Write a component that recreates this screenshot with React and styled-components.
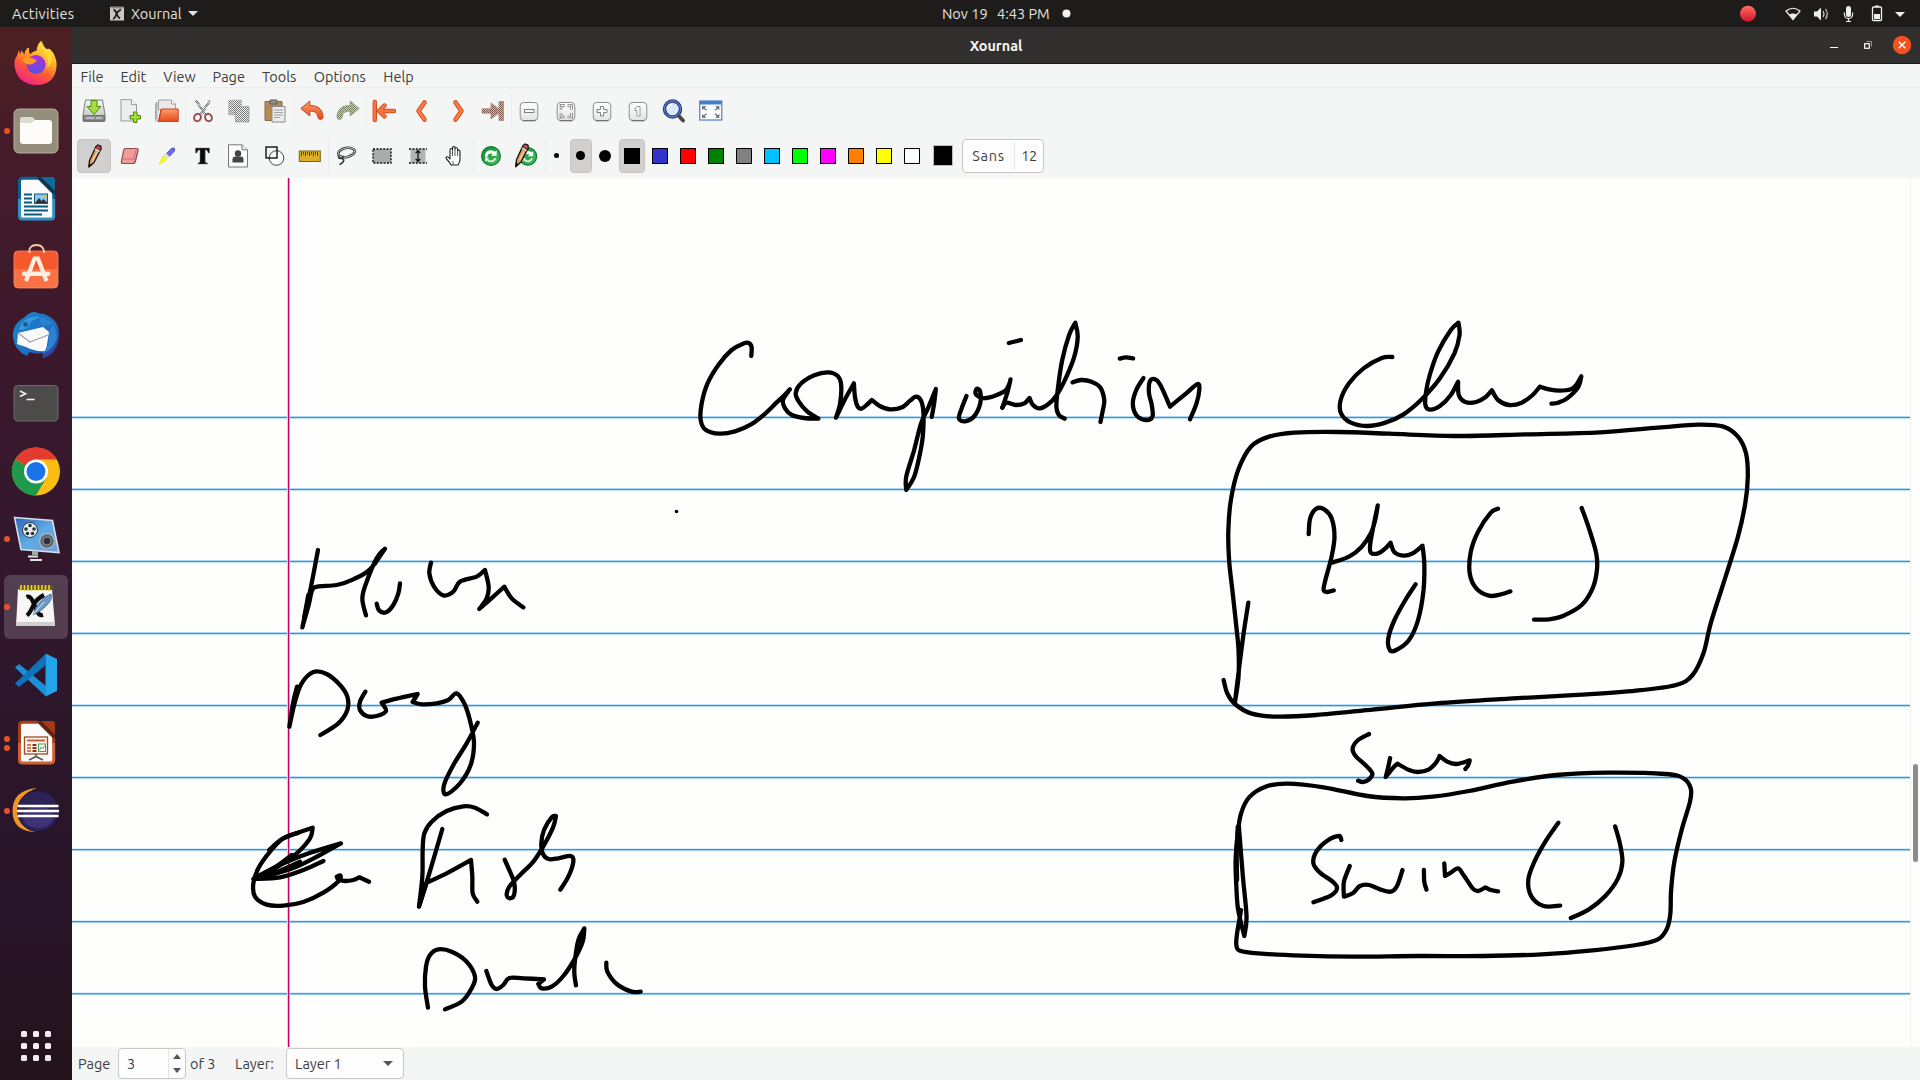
import React from "react";
import styled, { createGlobalStyle, css } from "styled-components";

const Global = createGlobalStyle`
  * { box-sizing: border-box; }
  html, body { margin: 0; padding: 0; background: #f4f6f6; overflow: hidden; }
  svg { display: block; flex: none; }
`;

const ui = `Ubuntu, "Open Sans", "Noto Sans", sans-serif`;

const Desktop = styled.div`
  width: 1920px;
  height: 1080px;
  display: flex;
  flex-direction: column;
  font-family: ${ui};
  font-size: 14.5px;
  color: #3d3d3d;
  overflow: hidden;
`;

const TopBar = styled.header`
  height: 27px;
  flex: none;
  display: grid;
  grid-template-columns: 1fr auto 1fr;
  align-items: center;
  background: #1d1c1b;
  color: #e4e2df;
  line-height: 27px;
`;

const TopLeft = styled.div`
  display: flex;
  align-items: center;
  padding-left: 12px;
`;

const TopCenter = styled.div`
  display: flex;
  align-items: center;
  padding-left: 93px;
  white-space: pre;
`;

const TopRight = styled.div`
  display: flex;
  align-items: center;
  justify-content: flex-end;
  padding-right: 14px;
`;

const Label = styled.span`
  display: block;
  flex: none;
  width: ${(p) => (p.$w ? `${p.$w}px` : "auto")};
  letter-spacing: ${(p) => p.$ls || 0}px;
  white-space: nowrap;
`;

const Space = styled.div`
  width: ${(p) => p.$w}px;
  flex: none;
`;

const Body = styled.div`
  flex: 1;
  display: flex;
  min-height: 0;
`;

const Dock = styled.nav`
  width: 72px;
  flex: none;
  display: flex;
  flex-direction: column;
  align-items: center;
  padding-top: 2px;
  background: linear-gradient(#4d2023 0%, #451b29 12%, #3b182c 32%, #34182e 48%, #2b162a 68%, #281428 86%, #25131f 93%, #23131b 100%);
`;

const DockSlot = styled.div`
  position: relative;
  width: 64px;
  height: 64px;
  margin: 2px 0;
  flex: none;
  display: flex;
  align-items: center;
  justify-content: center;
  border-radius: 6px;
  background: ${(p) => (p.$active ? "rgba(255,255,255,.17)" : "transparent")};
`;

const Running = styled.div`
  position: absolute;
  left: 0;
  top: 0;
  height: 64px;
  display: flex;
  flex-direction: column;
  justify-content: center;
  gap: 3px;
`;

const RunDot = styled.i`
  width: 6px;
  height: 6px;
  border-radius: 50%;
  background: #e95228;
`;

const AppGrid = styled.div`
  display: grid;
  grid-template-columns: repeat(3, 6px);
  grid-auto-rows: 6px;
  gap: 6px;
  margin-top: auto;
  margin-bottom: 19px;
`;

const GridDot = styled.i`
  border-radius: 1.5px;
  background: #fbeaf2;
`;

const Window = styled.main`
  flex: 1;
  min-width: 0;
  display: flex;
  flex-direction: column;
  background: #f4f6f6;
`;

const TitleBar = styled.div`
  height: 37px;
  flex: none;
  display: grid;
  grid-template-columns: 1fr auto 1fr;
  align-items: center;
  background: #32302f;
  border-bottom: 1px solid #1b1a19;
  color: #f6f4f2;
  font-weight: 700;
  font-size: 14.4px;
`;

const Title = styled.span`
  padding-top: 2px;
`;

const WinButtons = styled.div`
  display: flex;
  align-items: center;
  justify-content: flex-end;
  padding-right: 9px;
`;

const MenuBar = styled.div`
  height: 24px;
  flex: none;
  display: flex;
  align-items: center;
  padding: 2px 0 0 8.5px;
  border-bottom: 1px solid #eceeee;
`;

const ToolRow = styled.div`
  height: 45px;
  flex: none;
  display: flex;
  align-items: center;
  padding-left: 4px;
`;

const Slot = styled.div`
  width: ${(p) => p.$w || 36.28}px;
  height: 34px;
  flex: none;
  display: flex;
  align-items: center;
  justify-content: center;
  ${(p) => p.$sep && css`box-shadow: inset 1px 0 0 #eaecec;`}
`;

const Press = styled.div`
  width: ${(p) => p.$w || 34}px;
  height: 34px;
  flex: none;
  display: flex;
  align-items: center;
  justify-content: center;
  border-radius: 4px;
  border: 1px solid ${(p) => (p.$on ? "#c6c5c4" : "transparent")};
  background: ${(p) => (p.$on ? "#d2d0cf" : "transparent")};
`;

const Dot = styled.i`
  width: ${(p) => p.$d}px;
  height: ${(p) => p.$d}px;
  border-radius: 50%;
  background: #000;
`;

const Swatch = styled.i`
  width: 16px;
  height: 16px;
  border: 1px solid #000;
  background: ${(p) => p.$c};
`;

const BigSwatch = styled.i`
  width: 20px;
  height: 21px;
  border: 1px solid #bdbcbb;
  background: #000;
  flex: none;
`;

const FontButton = styled.div`
  width: 82px;
  height: 34px;
  display: flex;
  align-items: center;
  border: 1px solid #c9c6c3;
  border-radius: 4px;
  background: #fdfdfd;
  flex: none;
`;

const FontName = styled.span`
  width: 51px;
  padding-left: 9px;
  letter-spacing: .7px;
`;

const FontSize = styled.span`
  height: 28px;
  line-height: 28px;
  padding-left: 6px;
  border-left: 1px solid #e6e5e4;
  letter-spacing: -.3px;
`;

const Work = styled.div`
  flex: 1;
  min-height: 0;
  display: flex;
  background: #fefefc;
`;

const Paper = styled.div`
  width: 1838px;
  flex: none;
  overflow: hidden;
`;

const Scroll = styled.div`
  flex: 1;
  border-left: 1px solid #f1f1f0;
  padding: 586px 0 0 2px;
`;

const Thumb = styled.div`
  width: 5px;
  height: 98px;
  border-radius: 3px;
  background: #8b8b8a;
`;

const StatusBar = styled.footer`
  height: 33px;
  flex: none;
  display: flex;
  align-items: center;
  padding-left: 6px;
`;

const Field = styled.div`
  width: ${(p) => p.$w}px;
  height: 31px;
  flex: none;
  display: flex;
  align-items: center;
  justify-content: space-between;
  padding-left: 8px;
  border: 1px solid #c9c6c3;
  border-radius: 4px;
  background: #fefefe;
`;

const Steppers = styled.div`
  width: 17px;
  height: 29px;
  border-left: 1px solid #e4e3e2;
  display: grid;
  grid-template-rows: 1fr 1fr;
  place-items: center;
`;

const Triangle = styled.i`
  width: 0;
  height: 0;
  border-left: ${(p) => p.$s}px solid transparent;
  border-right: ${(p) => p.$s}px solid transparent;
  ${(p) =>
    p.$up
      ? css`border-bottom: ${p.$h}px solid ${p.$c};`
      : css`border-top: ${p.$h}px solid ${p.$c};`}
`;

/* ---------- ink ---------- */

// Turns "x,y x,y / x,y" into a smooth path. A slash marks a sharp turn.
function smooth(spec) {
  const runs = [];
  let last = null;
  spec.split("/").forEach((chunk) => {
    const pts = chunk.trim().split(/\s+/).filter(Boolean).map((p) => p.split(",").map(Number));
    if (last) pts.unshift(last);
    last = pts[pts.length - 1];
    runs.push(pts);
  });
  let d = `M${runs[0][0]}`;
  runs.forEach((p) => {
    for (let i = 0; i < p.length - 1; i++) {
      const a = p[i - 1] || p[i];
      const b = p[i];
      const c = p[i + 1];
      const e = p[i + 2] || c;
      d += `C${b[0] + (c[0] - a[0]) / 6},${b[1] + (c[1] - a[1]) / 6} ${c[0] - (e[0] - b[0]) / 6},${c[1] - (e[1] - b[1]) / 6} ${c}`;
    }
  });
  return d;
}

const INK = [
  {
    x: 680, y: 300, sx: 2.904,
    s: [
      "207,168 208,142 200,129 183,131 150,150 112,194 80,250 63,310 60,360 75,390 115,401 160,394 205,374 245,343 280,308 303,286 319,268 / 299,300 305,325 325,345 360,354 402,356 / 370,335 345,305 336,280 350,252 390,226 430,217 458,228 468,255 465,310 453,353 / 478,300 505,250 / 508,290 515,318 527,326 545,312 557,300 / 580,318 610,328 645,322 668,302 685,290 700,302 707,340 705,410 695,470 680,530 657,570 / 657,530 680,450 700,370 720,325 743,267 / 738,310 731,351",
      "832,288 818,325 810,355 828,364 855,348 872,310 872,275 862,266 858,280 868,290 890,294 920,285 945,272 955,255 960,238 / 950,280 936,323",
      "936,323 / 948,308 975,315 1000,310 1015,294 / 1025,315 1045,325 1070,312 1092,288 1120,235 1145,170 1155,110 1148,68 / 1130,105 1110,180 1098,260 1093,320 1100,345 1117,356",
      "955,129 990,120",
      "1277,176 1295,172 1316,175",
      "1140,247 1165,240 1195,245 1220,262 1232,300 1228,330 1221,366",
      "1346,234 1325,270 1315,310 1325,345 1352,360 1372,350 1370,315 1362,280 1364,245 1378,237 1395,255 1423,320 / 1470,280 1503,252 1508,270 1500,310 1481,358",
    ],
  },
  {
    x: 1200, y: 300, sx: 2.751,
    s: [
      "529,171 500,174 450,205 410,250 387,300 388,340 415,368 460,378 510,368 560,343 610,298 660,235 700,160 714,105 711,68 / 690,90 655,155 632,225 622,275 620,315 632,329 660,318 690,285 710,245 / 712,285 730,306 760,306 785,292 803,271 / 820,300 850,315 885,308 915,285 935,260 / 960,268 990,272 1020,268 1035,255 1049,229 / 1040,262 1010,295 985,308 967,311",
      "133,908 120,1000 108,1100 96,1208 / 106,1130 106,1050 100,980 90,880 80,780 78,690 85,600 105,510 140,440 190,410 260,398 380,396 520,401 700,408 900,403 1100,397 1260,383 1370,374 1440,380 1480,410 1502,460 1507,530 1500,610 1480,710 1440,850 1405,970 1385,1060 1355,1125 1310,1155 1200,1172 1050,1184 850,1196 650,1210 480,1228 320,1245 210,1250 140,1240 96,1212 75,1180 65,1140",
      "299,702 303,655 320,626 342,628 362,655 370,710 362,770 345,840 340,870 350,876 368,871",
      "362,788 410,770 445,740 470,700 482,660 489,616 / 475,690 468,735 470,758 490,760 510,745 524,728 / 535,757 560,767 585,760 612,737 / 617,790 615,870 600,960 575,1020 540,1050 522,1050 518,1015 535,960 565,900 593,853",
      "820,626 800,638 765,695 745,755 742,820 760,865 795,887 825,884 854,874",
      "1050,624 1070,685 1090,760 1092,810 1080,865 1050,915 1000,947 960,958 919,959",
    ],
  },
  {
    x: 1200, y: 710, sx: 2.751,
    s: [
      "465,72 435,90 420,115 428,138 455,165 474,190 465,208 448,216 435,212",
      "523,144 518,170 511,201 / 530,175 543,161 / 575,180 600,186 630,178 650,157 659,138 / 680,155 705,162 742,151 / 738,165 730,177",
      "113,600 102,670 100,705 110,722 160,730 280,737 420,740 600,738 780,738 940,733 1080,721 1200,705 1260,688 1285,655 1294,610 1296,540 1305,455 1325,360 1348,275 1350,235 1330,205 1280,192 1120,188 980,195 860,215 740,243 640,260 560,265 460,258 340,232 240,221 180,230 135,262 113,310 104,370 98,450 100,530 105,600 122,678 / 128,620 118,500 107,350",
      "104,350 101,430 102,510",
      "389,390 382,378 350,392 320,425 312,460 330,488 365,515 377,535 360,557 312,577",
      "412,468 396,515 396,560 / 420,550 440,528 465,525 495,538 525,545 542,528 557,480",
      "616,480 617,515 623,539",
      "672,460 674,498 / 690,488 710,475 725,495 750,535 765,543 785,532 / 800,540 820,544",
      "986,338 950,395 920,455 903,510 912,560 945,588 991,587",
      "1142,349 1155,400 1162,455 1150,505 1115,558 1070,598 1020,624",
    ],
  },
  {
    x: 230, y: 520, sx: 3,
    s: [
      "264,90 243,200 217,322 / 236,255 246,212 262,200 320,195 370,178 420,148 465,86 / 440,115 410,185 397,235 408,286",
      "455,95 435,130", "235,225 222,295",
      "440,251 448,272 468,277 490,255 505,220 510,190",
      "603,128 598,160 612,200 640,226 670,215 690,185 740,170 765,150 / 776,200 770,235 748,267 / 790,230 823,200 / 845,235 880,262",
      "201,500 190,545 178,620 / 195,545 215,490 250,456 290,462 330,495 352,530 352,570 325,610 271,645",
      "406,515 390,545 390,570 410,588 440,588 468,573 455,548 / 500,536 563,522 / 548,546 / 575,553 620,550 655,540 680,520 705,555 722,610 732,670 722,735 690,790 648,823 642,795 670,735 710,670 743,608",
    ],
  },
  {
    x: 230, y: 780, sx: 3,
    s: [
      "118,210 160,175 248,143 / 240,175 200,220 140,262 75,293 / 150,255 230,222 333,190 / 270,225 180,268 70,297 / 150,292 220,270 280,243",
      "205,158 160,175 120,215 85,265 70,310 75,350 110,374 160,377 220,366 280,338 326,303 326,290 / 326,298 345,303 370,300 388,292 / 417,305",
      "95,285 145,255 185,225", "90,288 150,272 210,245", "320,290 330,286 332,293 322,295",
      "771,103 735,83 700,79 650,93 605,125 583,160 578,210 577,290 567,380 / 595,290 637,147",
      "567,378 590,308 / 650,280 723,240 / 727,290 728,340 742,365",
      "824,239 840,275 853,310 852,345 840,355 830,345 838,320 870,285 910,245 945,190 970,140 978,108 / 965,112 942,150 934,190 938,220 955,237 985,235 1022,228 1030,245 1015,290 991,329",
      "594,683 585,620 588,560 600,525 625,508 665,515 710,545 735,590 725,625 695,665 645,688",
      "769,573 785,615 800,627 820,615 838,594 880,595 942,598 / 925,612 / 935,625 965,620 1000,588 1035,535 1058,485 1063,445 / 1045,480 1035,540 1033,580 1038,616",
      "1060,460 1045,510",
      "1129,548 1132,575 1160,612 1205,635 1232,635",
    ],
  },
];

const RULES = [417.5, 489.5, 561.5, 633.5, 705.6, 777.6, 849.7, 921.7, 993.8];

function Page() {
  return (
    <svg width="1838" height="869" viewBox="72 178 1838 869">
      {RULES.map((y) => (
        <g key={y}>
          <rect x="72" y={y - 1.3} width="1838" height="2.5" fill="#bfe4fb" />
          <rect x="72" y={y - 0.7} width="1838" height="1.3" fill="#3d93d6" />
        </g>
      ))}
      <rect x="287" y="178" width="3" height="869" fill="#f6bfe0" />
      <rect x="288" y="178" width="1.2" height="869" fill="#c4006e" />
      <g fill="none" stroke="#000" strokeWidth="4.3" strokeLinecap="round" strokeLinejoin="round">
        {INK.map((g, i) => (
          <g key={i} transform={`translate(${g.x} ${g.y}) scale(${1 / g.sx} ${1 / 3})`}>
            {g.s.map((s, j) => (
              <path key={j} d={smooth(s)} vectorEffect="non-scaling-stroke" />
            ))}
          </g>
        ))}
      </g>
      <circle cx="676.500" cy="511.500" r="1.800" fill="#000" />
    </svg>
  );
}

/* ---------- toolbar icons ---------- */

const I = ({ children, s = 24 }) => (
  <svg width={s} height={s} viewBox="0 0 24 24" fill="none">
    {children}
  </svg>
);

function Defs() {
  return (
    <svg width="0" height="0" style={{ position: "absolute" }}>
      <defs>
        <linearGradient id="or" x1="0" y1="0" x2="0" y2="1"><stop offset="0" stopColor="#fba06a" /><stop offset="1" stopColor="#e8491c" /></linearGradient>
        <linearGradient id="gry" x1="0" y1="0" x2="0" y2="1"><stop offset="0" stopColor="#f7f7f7" /><stop offset="1" stopColor="#bdbdbd" /></linearGradient>
        <linearGradient id="btn" x1="0" y1="0" x2="0" y2="1"><stop offset="0" stopColor="#ffffff" /><stop offset="1" stopColor="#e3e3e3" /></linearGradient>
        <pattern id="dg" width="2" height="2" patternUnits="userSpaceOnUse"><rect width="2" height="2" fill="#f4f4f4" /><rect width="1" height="1" fill="#777" /><rect x="1" y="1" width="1" height="1" fill="#777" /></pattern>
        <pattern id="dr" width="2" height="2" patternUnits="userSpaceOnUse"><rect width="2" height="2" fill="#e0b9ac" /><rect width="1" height="1" fill="#7e5548" /><rect x="1" y="1" width="1" height="1" fill="#7e5548" /></pattern>
        <pattern id="dn" width="2" height="2" patternUnits="userSpaceOnUse"><rect width="2" height="2" fill="#c6cfb8" /><rect width="1" height="1" fill="#75805f" /><rect x="1" y="1" width="1" height="1" fill="#75805f" /></pattern>
        <linearGradient id="ffo" x1=".8" y1="0" x2=".3" y2="1"><stop offset="0" stopColor="#fff14a" /><stop offset=".35" stopColor="#ffb52b" /><stop offset=".65" stopColor="#ff5a34" /><stop offset="1" stopColor="#f0208a" /></linearGradient>
        <linearGradient id="ffp" x1="0" y1="0" x2="0" y2="1"><stop offset="0" stopColor="#b02fe0" /><stop offset="1" stopColor="#5a50d8" /></linearGradient>
        <linearGradient id="soft" x1="0" y1="0" x2="0" y2="1"><stop offset="0" stopColor="#f4582b" /><stop offset=".5" stopColor="#f4582b" /><stop offset=".5" stopColor="#fa7145" /><stop offset="1" stopColor="#fa7145" /></linearGradient>
        <linearGradient id="wr" x1="0" y1="0" x2="0" y2="1"><stop offset=".5" stopColor="#0a5f8d" /><stop offset=".5" stopColor="#2f92c2" /></linearGradient>
        <linearGradient id="im" x1="0" y1="0" x2="0" y2="1"><stop offset=".5" stopColor="#a83d17" /><stop offset=".5" stopColor="#cf6135" /></linearGradient>
        <linearGradient id="tb" x1="0" y1="0" x2="1" y2="1"><stop offset="0" stopColor="#1a86c9" /><stop offset=".6" stopColor="#1f6fc4" /><stop offset="1" stopColor="#3a2a8c" /></linearGradient>
        <linearGradient id="scr" x1="0" y1="0" x2="1" y2="1"><stop offset="0" stopColor="#2a63b4" /><stop offset=".5" stopColor="#5fa9e4" /><stop offset="1" stopColor="#6f9fdc" /></linearGradient>
        <linearGradient id="rec" x1="0" y1="0" x2="0" y2="1"><stop offset="0" stopColor="#ff6f61" /><stop offset="1" stopColor="#d4122f" /></linearGradient>
        <linearGradient id="rcy" x1="0" y1="0" x2="1" y2="1"><stop offset="0" stopColor="#0f8a2c" /><stop offset="1" stopColor="#4cc06c" /></linearGradient>
      </defs>
    </svg>
  );
}

const Save = () => (
  <I><path d="M3.500 1h17l2.500 15v5.500q0 1-1 1H2q-1 0-1-1V16z" fill="url(#gry)" stroke="#7c7c7c" /><path d="M1.500 16.500h21v5h-21z" fill="#8b8d8b" stroke="#5c5c5c" strokeWidth=".7" /><path d="M4 19h8M14 19h6" stroke="#ccc" strokeWidth="1.400" /><path d="M9 1.500h6v6h4L12 15.500 5 7.500h4z" fill="#a6dc3f" stroke="#4f8a12" /></I>
);
const NewDoc = () => (
  <I><path d="M3 .6h10.500l5 5V22H3z" fill="#ededed" stroke="#9b9b9b" /><path d="M13.500.6v5h5" fill="#fff" stroke="#9b9b9b" /><path d="M15.500 13h3.500v3.500h3.500v3.500H19v3.500h-3.500V20H12v-3.500h3.500z" fill="#a8dd38" stroke="#4d8a0e" /></I>
);
const Open = () => (
  <I><path d="M.7 4.500 2 3v17H.7zM3.500 1h13l4 4v6h-17z" fill="#e9e9e9" stroke="#a3a3a3" /><path d="M.8 5v17h4" stroke="#a3a3a3" /><path d="M16.500 1v4h4" fill="#fff" stroke="#a3a3a3" /><path d="M6.500 10h16.700v12.500H3.500z" fill="url(#or)" stroke="#cf3f17" /><path d="M3.500 22.500 6 10" stroke="#cf3f17" /></I>
);
const Cut = () => (
  <I><path d="M5 1.500 14 15M19 1.500 10 15" stroke="url(#dg)" strokeWidth="3" /><path d="M5 1.500 14.500 15.500M19 1.500 9.500 15.500" stroke="#8a8a8a" strokeWidth=".8" /><ellipse cx="6.500" cy="18.500" rx="3.300" ry="3.800" stroke="#9a4f4f" strokeWidth="2" transform="rotate(25 6.500 18.500)" /><ellipse cx="17.500" cy="18.500" rx="3.300" ry="3.800" stroke="#9a4f4f" strokeWidth="2" transform="rotate(-25 17.500 18.500)" /></I>
);
const Copy = () => (
  <I><path d="M1.500 1h13v15h-13z" fill="url(#dg)" stroke="#b5b5b5" strokeWidth=".5" /><path d="M8.500 7.500h13.500V23H8.500z" fill="url(#dg)" stroke="#999" strokeWidth=".7" /></I>
);
const Paste = () => (
  <I><path d="M2 2.500h17v19H2z" fill="#b48a55" stroke="#8b6a3c" /><path d="M7 1h7v4H7z" fill="#8e8e8c" stroke="#5e5e5e" /><path d="M9 7.500h13V23H9z" fill="#ececec" stroke="#8b8b8b" /><path d="M11 11h9M11 13.500h9M11 16h9M11 18.500h6" stroke="#a0a0a0" /></I>
);
const Undo = ({ fill = "url(#or)", st = "#cf4517", flip }) => (
  <I><g transform={flip ? "matrix(-1 0 0 1 24 0)" : undefined}><path d="M.8 9.500 9.800 2v4.500q11.500-.5 13.200 10 .5 4-2.500 4-2.500 0-2.800-3.500-.9-5-7.900-5v5z" fill={fill} stroke={st} strokeLinejoin="round" /></g></I>
);
const First = ({ fill = "#f5743f", st = "#cf4517", flip }) => (
  <I><g transform={flip ? "matrix(-1 0 0 1 24 0)" : undefined} strokeLinecap="round" strokeLinejoin="round"><path d="M2.800 3v18M22 12.010H7.500M12.500 6.500 7 12l5.500 5.500" stroke={st} strokeWidth="4.400" /><path d="M2.800 3v18M22 12.010H7.500M12.500 6.500 7 12l5.500 5.500" stroke={fill} strokeWidth="2.900" /></g></I>
);
const LastOff = () => (
  <I><path d="M1 9.800h9V4l8 6V2.500h4.500v19H18V14l-8 6v-5.800H1z" fill="url(#dr)" stroke="#a77c6d" strokeWidth=".7" /></I>
);
const Chev = ({ flip }) => (
  <I><g transform={flip ? "matrix(-1 0 0 1 26 0)" : undefined} strokeLinecap="round" strokeLinejoin="round"><path d="M15.500 3.500 9.500 12l6 8.500" stroke="#d04a1c" strokeWidth="4.600" /><path d="M15.500 3.500 9.500 12l6 8.500" stroke="#f87c48" strokeWidth="2.800" /></g></I>
);
const Key = ({ children }) => (
  <I><rect x="3.200" y="3.500" width="17.600" height="18" rx="3.500" fill="url(#btn)" stroke="#8d8d8d" /><path d="M5.500 21.800h13" stroke="#666" />{children}</I>
);
const KMinus = () => <Key><rect x="7.500" y="10.500" width="9.500" height="3" fill="#fff" stroke="#808080" /></Key>;
const KFit = () => <Key><path d="M7 10.500v-4h4M13.500 6.500h4v4M17.500 14v4h-4M11 18H7v-4" stroke="#777" strokeWidth="2.600" /><path d="M7 10.500v-4h4M13.500 6.500h4v4M17.500 14v4h-4M11 18H7v-4" stroke="#fff" strokeWidth=".9" /></Key>;
const KPlus = () => <Key><path d="M10.500 7.500h3v3h3.500v3h-3.500v3.500h-3v-3.500H7v-3h3.500z" fill="#fff" stroke="#808080" /></Key>;
const KOne = () => <Key><path d="M11 7.500h3V17h-3v-5.500H9V10z" fill="#fff" stroke="#999" /></Key>;
const Zoomer = () => (
  <I><path d="m16 16 5 5.500" stroke="#4a4a44" strokeWidth="3.800" strokeLinecap="round" /><circle cx="10.500" cy="10" r="8" fill="#dce7f7" stroke="#1f3676" strokeWidth="3.400" /><circle cx="10.500" cy="10" r="8" stroke="#5c80c8" strokeWidth="1.300" /><path d="M6 10q0-4 4-4.500" stroke="#fff" strokeWidth="1.500" /></I>
);
const Full = () => (
  <I><rect x=".8" y="2" width="22" height="19" fill="#fbfcff" stroke="#3565b3" /><path d="M.8 2h22v3.500h-22z" fill="#4480cf" /><path d="M3.500 10.500v-3h3zM20 10.500v-3h-3zM3.500 15.500v3h3zM20 15.500v3h-3z" fill="#666" stroke="#666" strokeWidth=".7" /><path d="m4 8 3.500 3.200M19.500 8 16 11.200M4 18l3.500-3.200M19.500 18 16 14.800" stroke="#777" strokeWidth="1.300" /></I>
);

const PencilShape = () => (
  <><path d="m14 2.500 2-1.500 2.700 1 .3 3L12 18.500 7 23l.5-6.500z" fill="#d9a05f" stroke="#111" strokeWidth="1.300" strokeLinejoin="round" /><path d="m14 2.500 2-1.500 2.700 1 .3 3-1 1.500-4.500-2z" fill="#c2444b" stroke="#111" strokeWidth=".8" /><path d="m13 5 4.500 2.500" stroke="#ddd" strokeWidth="1.500" /><path d="m15 8-4.500 9" stroke="#f3d2a4" strokeWidth="1.200" /><path d="M7 23v-3l2 1z" fill="#111" stroke="#111" /></>
);
const Pencil = () => <I><PencilShape /></I>;
const Eraser = () => (
  <I><path d="M7.500 4.500h11q2 0 1.600 2L17.500 17q-.6 2.500-3 2.500H5q-2 0-1.500-2.500L5.500 7q.4-2.500 2-2.500z" fill="#f09b9b" stroke="#8e4a4e" strokeWidth="1.200" /><path d="M4.500 15H16l2-9" stroke="#c96c70" /></I>
);
const Highlighter = () => (
  <I><path d="m12 10 6-6 2.500.3v2.700L15 12.800z" fill="#6b6bf0" stroke="#3a3f99" strokeWidth=".8" /><path d="m11 9.800 4 4" stroke="#ddd" strokeWidth="2.600" /><path d="m9.500 11.500 3.700 3.700-2.700 2.500-5.500 2.300 2-4z" fill="#ffff1e" stroke="#c9c92e" strokeWidth=".5" /></I>
);
const TextT = () => (
  <I><path d="M5.500 4h14v5h-1.300q-.5-3-3-3.200v11.700q.1 1.500 2.300 1.500v1H8v-1q2-.1 2-1.500V5.800Q7.300 6 6.800 9H5.500z" fill="#0a0a0a" stroke="#777" strokeWidth=".5" /></I>
);
const Image = () => (
  <I><path d="M2.500.8H16l5.500 5V23h-19z" fill="#fcfcfc" stroke="#777" /><path d="M16 .8v5h5.500" fill="#eee" stroke="#777" /><circle cx="12" cy="9.500" r="3.200" fill="#444" /><path d="M6.500 18.500v-3q0-3 3-3h5q3 0 3 3v3z" fill="#444" /></I>
);
const Shapes = () => (
  <I><circle cx="14.500" cy="14" r="7.300" fill="#fff" fillOpacity=".5" stroke="#444" /><rect x="4" y="3" width="11" height="11" stroke="#111" strokeWidth="1.400" /></I>
);
const Ruler = () => (
  <I><rect x="1.300" y="7" width="21" height="10.500" fill="#dcae2a" stroke="#7d6010" /><path d="M3.500 8v4M5.500 8v2.500M7.500 8v4M9.500 8v2.500M11.500 8v4M13.500 8v2.500M15.500 8v4M17.500 8v2.500M19.500 8v4" stroke="#5a430a" /></I>
);
const Lasso = () => (
  <I><ellipse cx="12.500" cy="8.500" rx="8.500" ry="4.500" transform="rotate(-12 12.500 8.500)" stroke="#333" strokeWidth="2.600" /><ellipse cx="12.500" cy="8.500" rx="8.500" ry="4.500" transform="rotate(-12 12.500 8.500)" stroke="#ddd" strokeWidth=".9" /><path d="M5 11.500q-1.500 3 1.500 3t2.500-2.500M8 14.500q3 1 1 3.500-1 1.500-3.500 2.500" stroke="#333" strokeWidth="1.500" /></I>
);
const SelRect = () => (
  <I><rect x="3" y="5" width="18" height="14" fill="#ababab" stroke="#111" strokeWidth="1.400" strokeDasharray="2 1.400" /></I>
);
const VSpace = () => (
  <I><rect x="4.500" y="5" width="15" height="14" fill="#b4b4b4" /><path d="M3 5h18M3 19h18" stroke="#111" strokeWidth="1.400" strokeDasharray="2 1.400" /><path d="M12 7v10M9.700 9.200 12 6.500l2.300 2.700M9.700 14.800l2.300 2.700 2.300-2.700" stroke="#111" strokeWidth="1.300" /></I>
);
const Hand = () => (
  <I><path d="M9 21q-1.500-3-4-5.500-1.700-2-.3-2.700Q6 12.500 8 15V6q0-1.500 1.200-1.500T10.500 6V4q0-1.400 1.300-1.400T13 4v1q.2-1.200 1.400-1.200T15.600 5v2q.2-1 1.300-1T18 7.500V15q0 3-2 6z" fill="#fff" stroke="#222" strokeWidth="1.100" strokeLinejoin="round" /><path d="M10.500 6v6M13 5v7M15.600 7v5M11 21v-4" stroke="#444" strokeWidth=".9" /></I>
);
const RecycleShape = () => (
  <><circle cx="12" cy="12" r="9.400" fill="url(#rcy)" stroke="#0d7a2a" strokeWidth="1.200" /><path d="M6 13q-.5-5 4-6.500 3.500-.8 6 1.300l1.700-1.500v5.500H12l1.800-1.700q-2-1.200-4 0Q8 11.500 8.500 14z" fill="#fff" /><path d="M17.500 14q-1.500 3.800-5 4.300-3 .2-5-1.800L6 18v-4.300l4.500.8-1.200 1.200q2 1.300 4.200.3 1.500-.8 2-2z" fill="#d9f5df" /></>
);
const Recycle = () => <I><RecycleShape /></I>;
const PencilRecycle = () => (
  <I s={25}><g transform="translate(2.500 2) scale(.9)"><RecycleShape /></g><g transform="translate(-5 0) scale(.98)"><PencilShape /></g></I>
);

/* ---------- dock icons ---------- */

const D = ({ children }) => (
  <svg width="50" height="50" viewBox="0 0 50 50" fill="none">
    {children}
  </svg>
);
const Firefox = () => (
  <D><path d="M10 12q2 2.500 3 4.500Q14 10 18 9q-1 4 1 7 2.500-3 7-4 0-6 5-10.500 0 5 5 9 3-.5 4 0 7 7 7 17Q46 48 25.500 48.500 3.500 47 2.500 25.500 3 20 5.500 17q.5-3 2-5.500 0 3 1 4.500z" fill="url(#ffo)" transform="translate(1 1) scale(.95)" /><circle cx="25" cy="26.500" r="9.500" fill="url(#ffp)" /><path d="M11 22q6-5 15 .5-4 4-7 4-5 0-8-4.500z" fill="#ff9a26" /><path d="M31 3q-2 6 3 12 4 6 2 15 6-4 5-14Q33 11 31 3z" fill="#ffdf3e" opacity=".75" /></D>
);
const Files = () => (
  <D><rect x="3" y="3" width="44" height="44" rx="5" fill="#958e7d" stroke="#b5ae9e" /><path d="M9 14q0-3 3-3h9l3 3h14q3 0 3 3v18q0 3-3 3H12q-3 0-3-3z" fill="#fdfcf9" /><path d="M9 17v-3q0-3 3-3h9l3 3-3.500 3z" fill="#dedad1" /></D>
);
const Doc = ({ grad, edge, children }) => (
  <D><path d="M11.500 4.300H28L42.700 19v23q0 3-3 3H11.500q-3 0-3-3V7.300q0-3 3-3z" fill="#fbfbfb" stroke={`url(#${grad})`} strokeWidth="3" /><path d="M30 3h11q3 0 3 3v11z" fill={edge} /><path d="m27 3 17 17" stroke="#0006" strokeWidth="2.500" />{children}</D>
);
const Writer = () => (
  <Doc grad="wr" edge="#0d6c9c"><path d="M13 20.500h8M13 24.500h8M13 28.500h8M13 32.500h24M13 36.500h24M13 40.500h18" stroke="#0c5984" strokeWidth="1.800" /><rect x="23.500" y="20" width="13" height="9.500" fill="#8cc9ea" stroke="#0c5984" /><path d="m24 29 4-5 2.500 3 2-2 4 4z" fill="#2d3338" /><circle cx="34" cy="22.500" r="1.500" fill="#f2b92e" /></Doc>
);
const Software = () => (
  <D><path d="M18 11q0-8 7.500-8t7.500 8" stroke="#f1c9a8" strokeWidth="1.800" /><rect x="3" y="9" width="44" height="37" rx="4" fill="url(#soft)" stroke="#ff8a63" strokeWidth=".8" /><path d="M18.500 11V8.500M33 11V8.500" stroke="#f1c9a8" strokeWidth="2" /><path d="M15 39 23.500 16.500h3.500L35.500 39" stroke="#fceee0" strokeWidth="4.200" /><rect x="11" y="29.500" width="28.500" height="4.500" rx="2.200" fill="#fceee0" /></D>
);
const Thunderbird = () => (
  <D><path d="M2 27Q1 14 14 7q4-5 10-5 4 2 9 2 15 5 15 20 0 14-9 21-5 3-8 3 2-3 1-5-6 2-13-1-2 2-3 4-13-6-14-19z" fill="url(#tb)" /><path d="M7 23 32 17l6 5-3 19q-11 1-20-4L6 34z" fill="#fafafa" /><path d="m7 23 12 9 18-7" stroke="#9aa3ad" strokeWidth="1.200" /><path d="M8 20q4-15 22-13-10 2-13 10-4 4-9 3z" fill="#3599dd" /><circle cx="14.500" cy="14.500" r="2.400" fill="#1a5c92" /><path d="M32 17q5-4 12-2-5 2-6 7 1 14-7 22 12-4 15-17-1-14-14-20-6 3 0 10z" fill="#2b82d2" /></D>
);
const Terminal = () => (
  <D><rect x="3" y="7.500" width="44" height="35.500" rx="4" fill="#4c4b4a" stroke="#6d6c6b" /><path d="m9 13 5.500 2.800L9 18.500M15.500 21.500h8" stroke="#f2f2f2" strokeWidth="1.700" /></D>
);
const Chrome = () => (
  <D><circle cx="25" cy="25.500" r="24" fill="#f9bd13" /><path d="M25 25.500 4.200 13.500A24 24 0 0 1 45.800 13.500H25z" fill="#e33b2d" /><path d="M25 25.500 35.400 31.500 25 49.500A24 24 0 0 1 4.200 13.500z" fill="#1f9a4d" /><circle cx="25" cy="25.500" r="12" fill="#fff" /><circle cx="25" cy="25.500" r="9.400" fill="#1a73e8" /></D>
);
const Kazam = () => (
  <D><path d="m3.500 3.500 38 3 6.500 32-38-3z" fill="url(#scr)" stroke="#d5dfe8" strokeWidth="1.600" /><circle cx="19" cy="16" r="7.500" fill="#e9eef2" stroke="#2b3a4a" /><g fill="#233"><circle cx="19" cy="11.500" r="1.800" /><circle cx="15" cy="15" r="1.800" /><circle cx="23" cy="15" r="1.800" /><circle cx="16.500" cy="19.500" r="1.800" /><circle cx="21.500" cy="19.500" r="1.800" /></g><circle cx="36" cy="27" r="7.500" fill="#5c6670" stroke="#aab4bf" strokeWidth="1.500" /><circle cx="36" cy="27" r="4" fill="#2c3238" stroke="#8a949e" /><path d="M17 42.500h10M19 46h12" stroke="#e3e3e3" strokeWidth="2.200" /><path d="M21 37h6v4h-6z" fill="#9aa" /></D>
);
const XournalIcon = () => (
  <D><path d="M7 7h34l3 37H5z" fill="#f6f6f5" /><path d="M5 40h39v4H5z" fill="#cfcfcd" /><rect x="8" y="4" width="34" height="4" fill="#6b5a10" /><path d="M10 3v6M13.500 3v6M17 3v6M20.500 3v6M24 3v6M27.500 3v6M31 3v6M34.500 3v6M38 3v6" stroke="#e9cf3f" strokeWidth="1.600" /><path d="M15.500 15q4-2 7 6l4 9q2 4 5.500 3M33 13q-8 4-11 11-3 7-6 9.500" stroke="#0a0a0a" strokeWidth="4.200" /><path d="M40 12q2 5-4 11-5 6-14 10 2-8 7-13 5-6 11-8z" fill="#6d9bc9" stroke="#3c6a9c" strokeWidth=".8" /><path d="m19 36 14-16" stroke="#dfeaf5" /></D>
);
const Code = () => (
  <D><path d="M34.500 3.500 46 9v32l-11.500 5.500z" fill="#23a3ea" /><path d="M4 17.500 8 14l27 22v10.500z" fill="#1b8fd8" /><path d="M4 33.500 8 37l27-22V3.500z" fill="#0b74bc" /></D>
);
const Impress = () => (
  <Doc grad="im" edge="#a33c17"><rect x="13.500" y="19" width="23" height="17" fill="#fff5ee" stroke="#9c4a28" strokeWidth="1.300" /><path d="M16 22.500h18" stroke="#c86036" strokeWidth="2" /><path d="M16 27h4M16 30h4M16 33h4" stroke="#d97e54" strokeWidth="2" /><path d="M21.500 27h4M21.500 30h4M21.500 33h4" stroke="#8a2f10" strokeWidth="2" /><rect x="27.500" y="26" width="7" height="7.500" fill="#fff" stroke="#4a9c55" /><path d="m28.500 32 2-3 1.500 1.500 2-3" stroke="#4a9c55" /><path d="M25 36v2.500M18 42l7-3.500 7 3.500" stroke="#555" strokeWidth="1.600" /></Doc>
);
const Eclipse = () => (
  <D><path d="M26 2Q1.500 4 1.500 25T26 46Q8 40 8 24T26 2z" fill="#f39225" /><circle cx="27" cy="25" r="20.500" fill="#2c2255" stroke="#1c1538" /><ellipse cx="27" cy="31" rx="15" ry="11" fill="#463a85" opacity=".7" /><path d="M6.500 20h41M6 25h42M6.500 30h41" stroke="#fff" strokeWidth="2.600" /></D>
);

const DOCK = [
  [Firefox, 0], [Files, 1], [Writer, 0], [Software, 0], [Thunderbird, 0], [Terminal, 0],
  [Chrome, 0], [Kazam, 1], [XournalIcon, 1, true], [Code, 0], [Impress, 2], [Eclipse, 1],
];

const MENUS = [["File", 40], ["Edit", 42.8], ["View", 49.3], ["Page", 49.3], ["Tools", 51.8], ["Options", 69.6], ["Help", 60]];

const ROW1 = [
  [Save], [NewDoc], [Open], [Cut, {}, true], [Copy], [Paste],
  [Undo, {}, true], [Undo, { flip: true, fill: "url(#dn)", st: "#93a07e" }],
  [First, {}, true], [Chev], [Chev, { flip: true }], [LastOff],
  [KMinus, {}, true], [KFit], [KPlus], [KOne], [Zoomer], [Full],
];

const ROW2 = [
  [Pencil], [Eraser], [Highlighter], [TextT], [Image], [Shapes], [Ruler],
  [Lasso, true], [SelRect], [VSpace], [Hand], [Recycle, true], [PencilRecycle],
];

const COLORS = ["#000000", "#3333cc", "#ff0000", "#008000", "#808080", "#00c0ff", "#00ff00", "#ff00ff", "#ff8000", "#ffff00", "#ffffff"];

export default function App() {
  return (
    <Desktop>
      <Global />
      <Defs />
      <TopBar>
        <TopLeft>
          <Label $w={98} $ls={0.3}>Activities</Label>
          <svg width="14" height="15" viewBox="0 0 14 15">
            <path d="M0 1h14v13.500H0z" fill="#c9c8c6" /><path d="M1 .5h12v2H1z" fill="#8b8a88" />
            <path d="M3.500 4q2 0 3 3.500t3.500 5M11 3.500Q7.500 5 6 9t-3 3.500" stroke="#222" strokeWidth="1.900" fill="none" />
          </svg>
          <Space $w={7} />
          <Label $w={57}>Xournal</Label>
          <Triangle $s={5} $h={5.5} $c="#e4e2df" />
        </TopLeft>
        <TopCenter>
          <Label $w={55}>Nov 19</Label>
          <Label $w={65}>4:43 PM</Label>
          <svg width="9" height="9" viewBox="0 0 9 9"><circle cx="4.500" cy="4.500" r="4" fill="#f2f1f0" /></svg>
        </TopCenter>
        <TopRight>
          <svg width="166" height="20" viewBox="1740 3 166 20" fill="none">
            <circle cx="1748" cy="12.700" r="8" fill="url(#rec)" />
            <path d="M1786 10q7-5.500 14 0l-7 8.500z" stroke="#eee" strokeWidth="1.200" /><path d="M1789.300 13.500q3.700-2 7.400 0l-3.700 5z" fill="#eee" />
            <path d="M1814 10.500h3l4-4v13l-4-4h-3z" fill="#eee" /><path d="M1823 10q2 3 0 6M1825.500 8q3.500 5 0 10" stroke="#ccc" strokeWidth="1.200" />
            <rect x="1846" y="5" width="5" height="11" rx="2.500" fill="#eee" /><path d="M1844.300 11.500q-.3 6 4.200 6t4.200-6M1848.500 17.500v3M1846 20.500h5" stroke="#eee" strokeWidth="1.200" />
            <rect x="1872.500" y="6" width="9" height="13.500" rx="1" stroke="#eee" strokeWidth="1.300" /><path d="M1875 4.500h4v1.500h-4zM1874 13h6v5h-6z" fill="#eee" />
            <path d="M1895 11h10l-5 5z" fill="#eee" />
          </svg>
        </TopRight>
      </TopBar>
      <Body>
        <Dock>
          {DOCK.map(([Icon, n, active], i) => (
            <DockSlot key={i} $active={active}>
              {n > 0 && <Running>{Array.from({ length: n }, (_, k) => <RunDot key={k} />)}</Running>}
              <Icon />
            </DockSlot>
          ))}
          <AppGrid>{Array.from({ length: 9 }, (_, k) => <GridDot key={k} />)}</AppGrid>
        </Dock>
        <Window>
          <TitleBar>
            <span />
            <Title>Xournal</Title>
            <WinButtons>
              <svg width="86" height="20" viewBox="1825 35 86 20" fill="none">
                <path d="M1830 47.500h8" stroke="#fff" />
                <path d="M1866.500 41.500h5v5" stroke="#9a9998" /><rect x="1864.700" y="43.700" width="4.600" height="4.600" stroke="#fff" strokeWidth="1.200" />
                <circle cx="1902" cy="45" r="9.200" fill="#f4511f" /><path d="m1898.700 41.700 6.600 6.600M1905.300 41.700l-6.600 6.600" stroke="#fff" strokeWidth="1.400" />
              </svg>
            </WinButtons>
          </TitleBar>
          <MenuBar>
            {MENUS.map(([t, w]) => <Label key={t} $w={w}>{t}</Label>)}
          </MenuBar>
          <ToolRow>
            {ROW1.map(([Icon, props, sep], i) => (
              <Slot key={i} $sep={sep}><Icon {...props} /></Slot>
            ))}
          </ToolRow>
          <ToolRow>
            {ROW2.map(([Icon, sep], i) => (
              <Slot key={i} $sep={sep} $w={36.05}><Press $on={i === 0}><Icon /></Press></Slot>
            ))}
            <Slot $w={24} $sep><Dot $d={5} /></Slot>
            <Slot $w={24}><Press $w={22} $on><Dot $d={8.5} /></Press></Slot>
            <Slot $w={24}><Dot $d={12} /></Slot>
            <Space $w={1.6} />
            {COLORS.map((c, i) => (
              <Slot key={c} $w={28}><Press $w={26} $on={i === 0}><Swatch $c={c} /></Press></Slot>
            ))}
            <Space $w={7} />
            <BigSwatch />
            <Space $w={9} />
            <FontButton><FontName>Sans</FontName><FontSize>12</FontSize></FontButton>
          </ToolRow>
          <Work>
            <Paper><Page /></Paper>
            <Scroll><Thumb /></Scroll>
          </Work>
          <StatusBar>
            <Label $w={40}>Page</Label>
            <Field $w={68}>
              3
              <Steppers>
                <Triangle $up $s={4.5} $h={5} $c="#555" />
                <Triangle $s={4.5} $h={5} $c="#555" />
              </Steppers>
            </Field>
            <Space $w={4} />
            <Label $w={45}>of 3</Label>
            <Label $w={51}>Layer:</Label>
            <Field $w={118}>
              Layer 1
              <Space $w={40} />
              <Triangle $s={5} $h={5} $c="#555" />
              <Space $w={9} />
            </Field>
          </StatusBar>
        </Window>
      </Body>
    </Desktop>
  );
}
